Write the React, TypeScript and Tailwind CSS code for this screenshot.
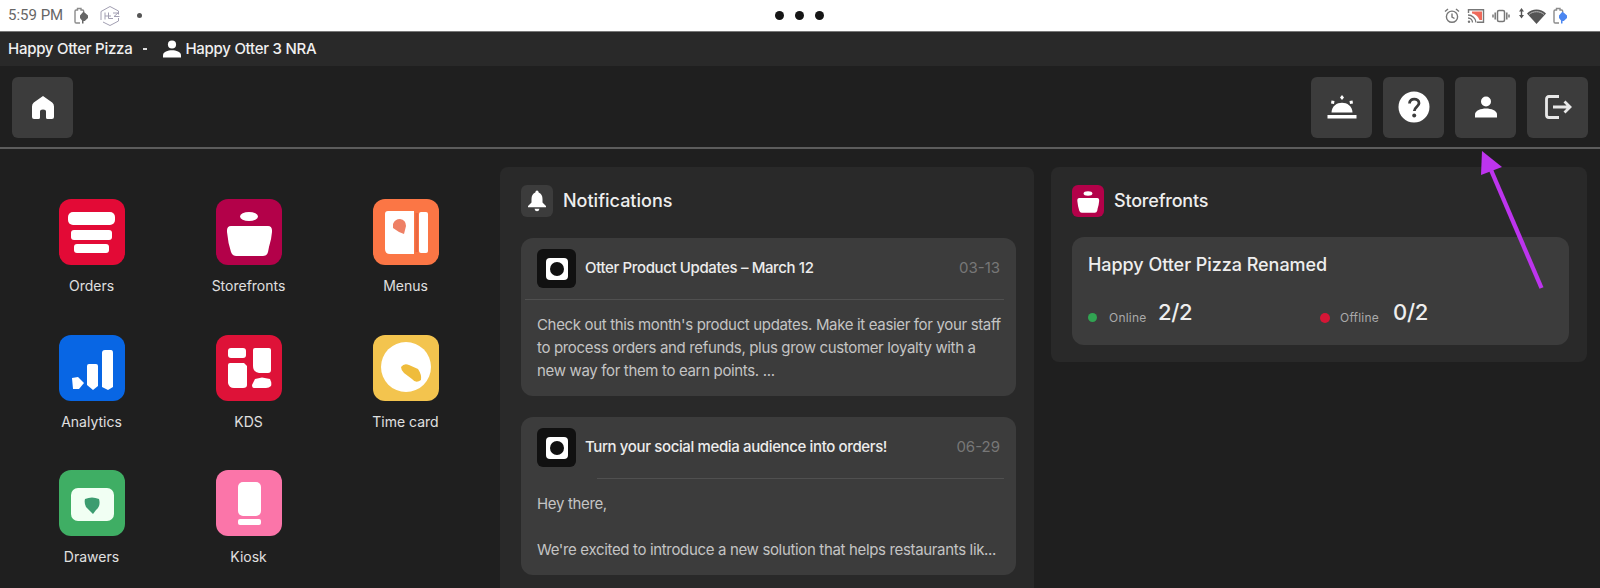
import type { ReactNode } from "react";

// Status bar icons
const BatteryIcon = ({ accent }: { accent: string }) => (
  <svg viewBox="0 0 16 18" className="h-[18px] w-4" fill="none">
    <path d="M7 16H3.2A1.2 1.2 0 0 1 2 14.800V4.200A1.200 1.200 0 0 1 3.200 3H4.500V1.500H8V3H9.500A1.200 1.200 0 0 1 10.700 4.200V5" stroke="#8b8b8b" strokeWidth="1.400" />
    <path d="M10.500 4.500L15 8.500V11L11.800 14H10.500V16.500H9V13.500L7 11V8.500Z" fill={accent} />
  </svg>
);

const HexIcon = () => (
  <svg viewBox="0 0 22 22" className="h-[22px] w-[22px]" fill="none" stroke="#a29fb2" strokeWidth="1">
    <path d="M11 1.500L19.500 6V9.500M11 1.500L2 6.500V15M4 17L11 20.500L19.500 16V13" />
    <path d="M6 7.500V14.500M9.500 7.500V13.500H14M6 11H12M14 8H19L15 11.500H20.500" />
  </svg>
);

const AlarmIcon = () => (
  <svg viewBox="0 0 16 16" className="h-4 w-4" fill="none" stroke="#777" strokeWidth="1.400">
    <circle cx="8" cy="8.700" r="5.600" />
    <path d="M8 5.500V9L10.500 10.500M1 3.500L4 1M15 3.500L12 1" />
  </svg>
);

const CastIcon = () => (
  <svg viewBox="0 0 18 16" className="h-4 w-[18px]" fill="none">
    <path d="M1.500 5V1.800H16.500V14.200H10" stroke="#777" strokeWidth="1.400" />
    <path d="M5 3.500H15V12H12.500C11.500 9 8.500 6 5 5.500Z" fill="#ee6a5b" />
    <path d="M1 7C5 7 9 10.500 9 14.500M1 10C3.500 10 5.500 12 5.500 14.500" stroke="#777" strokeWidth="1.300" />
    <circle cx="2" cy="13.700" r="1.200" fill="#777" />
  </svg>
);

const VibrateIcon = () => (
  <svg viewBox="0 0 18 16" className="h-4 w-[18px]" fill="none" stroke="#777" strokeWidth="1.500">
    <rect x="5.500" y="2.500" width="7" height="11" rx="1.500" />
    <path d="M3.200 4.500V11.500M14.800 4.500V11.500M1 6.500V9.500M17 6.500V9.500" />
  </svg>
);

const WifiIcon = () => (
  <svg viewBox="0 0 28 18" className="h-[18px] w-7" fill="#555">
    <path d="M3.500 1L6 4.500H1ZM3.500 11.500L1 8H6ZM2.800 4H4.200V9H2.800Z" />
    <path d="M18.500 17L9 6.500C14 1 23 1 28 6.500Z" />
    <path d="M11 7.500C15 3.800 22 3.800 26 7.500" fill="none" stroke="#bbb" strokeWidth="1" />
  </svg>
);

// Header icons
const PersonIcon = ({ className }: { className: string }) => (
  <svg viewBox="0 0 22 22" className={className} fill="#fff">
    <circle cx="11" cy="5.500" r="5" />
    <path d="M0 21.500V18.500C0 14.500 6 12.500 11 12.500S22 14.500 22 18.500V21.500Z" />
  </svg>
);

const HomeIcon = () => (
  <svg viewBox="0 0 24 24" className="h-6 w-6" fill="#fff">
    <path d="M12 1L2.800 7.500Q1 9 1 11.500V22Q1 24 3 24H7.500Q9 24 9 22.500V16.500Q9 14.500 12 14.500T15 16.500V22.500Q15 24 16.500 24H21Q23 24 23 22V11.500Q23 9 21.200 7.500Z" />
  </svg>
);

const ServiceIcon = () => (
  <svg viewBox="0 0 30 24" className="h-6 w-[30px]" fill="#fff">
    <path d="M4.500 17.500C5 4.500 25 4.500 25.500 17.500Z" />
    <rect x="0.500" y="20" width="29" height="3.500" />
    <path d="M15 0L17 2.500L15 5L13 2.500ZM4.500 5.500L7.500 6L7 9L4 8.500ZM25.500 5.500L22.500 6L23 9L26 8.500Z" />
  </svg>
);

const HelpIcon = () => (
  <svg viewBox="0 0 32 32" className="h-8 w-8" fill="none">
    <circle cx="16" cy="16" r="15.500" fill="#fff" />
    <path d="M11.500 12.500C11.500 6.500 21 7 21 12.200C21 15.500 16.300 16 16.300 20" stroke="#3c3c3c" strokeWidth="2.800" />
    <circle cx="16.200" cy="24.500" r="2" fill="#3c3c3c" />
  </svg>
);

const LogoutIcon = () => (
  <svg viewBox="0 0 28 26" className="h-[26px] w-7" fill="none" stroke="#e8e8e8" strokeWidth="2.800">
    <path d="M15 2.500H5Q2.500 2.500 2.500 5V21Q2.500 23.500 5 23.500H15" />
    <path d="M9 13H26M20.500 7.500L26 13L20.500 18.500" />
  </svg>
);

const BellIcon = () => (
  <svg viewBox="0 0 20 22" className="h-[22px] w-5" fill="#fff">
    <path d="M10 0.500Q11.500 0.500 11.700 2.500Q15.500 4 15.500 9V12.500L19 16V17.200H1V16L4.500 12.500V9Q4.500 4 8.300 2.500Q8.500 0.500 10 0.500Z" />
    <path d="M7.500 18.700H12.500Q12 21.300 10 21.300T7.500 18.700Z" />
  </svg>
);

const BasketShape = () => (
  <>
    <ellipse cx="33" cy="17.500" rx="9" ry="4.500" />
    <path d="M15 27H52Q56.500 27 56 33Q55.500 40 53 48L52 53Q51 57 47 57H20Q16.500 57 15 53Q12 44 11 33Q10.500 27 15 27Z" />
  </>
);

type AppTile = { name: string; color: string; art: ReactNode };

const apps: AppTile[] = [
  {
    name: "Orders",
    color: "bg-[#e30a36]",
    art: (
      <>
        <rect x="9" y="13" width="47" height="13" rx="5" />
        <rect x="12" y="31" width="41" height="10" rx="3" />
        <rect x="15" y="45" width="35" height="9" rx="3" />
      </>
    ),
  },
  { name: "Storefronts", color: "bg-[#b30149]", art: <BasketShape /> },
  {
    name: "Menus",
    color: "bg-[#fb7645]",
    art: (
      <>
        <path d="M15 12H41V55H17Q12 55 12 50V15Q12 12 15 12Z" />
        <rect x="46" y="13" width="9" height="41" rx="2" />
        <path d="M20 25Q22 20 27 20Q33 21 33 27L31 35Q25 33 20 29Z" fill="#ee8065" />
        <path d="M42.500 14H45V53H42.500Z" fill="#e96742" />
      </>
    ),
  },
  {
    name: "Analytics",
    color: "bg-[#0866e4]",
    art: (
      <>
        <path d="M13 43L19 42L25 48L20 54H14Z" />
        <path d="M28 31Q28 29 30 29H37Q39 29 39 31V51L34 55L28 50Z" />
        <path d="M43 18Q43 15 46 15H52Q54 15 54 18V52L49 55L43 52Z" />
      </>
    ),
  },
  {
    name: "KDS",
    color: "bg-[#de1238]",
    art: (
      <>
        <rect x="12" y="13" width="18" height="10" rx="3" />
        <path d="M12 30Q12 28 14 28H28L31 31V50Q31 53 27 53H18Q13 53 12 48Z" />
        <path d="M37 15Q37 13 39 13H53Q55 13 55 15V35Q55 38 52 38H43Q37 37 37 31Z" />
        <path d="M39 44L46 42.500L54 44Q56 48 55 51Q53 53 50 53H38Q36 53 36 50Z" />
      </>
    ),
  },
  {
    name: "Time card",
    color: "bg-[#f3c44e]",
    art: (
      <>
        <circle cx="33" cy="32" r="25" />
        <path d="M28 32Q31 28 36 30L45 34Q49 40 48 45Q43 49 39 44L31 38Q28 35 28 32Z" fill="#efbc3c" />
      </>
    ),
  },
  {
    name: "Drawers",
    color: "bg-[#3fae64]",
    art: (
      <>
        <rect x="12" y="18" width="43" height="33" rx="7" fill="#f1fff3" />
        <path d="M26 29Q33 26 40 29Q42 36 37 40L34 44L27 37Q25 33 26 29Z" fill="#3c9c70" />
      </>
    ),
  },
  {
    name: "Kiosk",
    color: "bg-[#fb75a9]",
    art: (
      <>
        <rect x="22" y="12" width="23" height="34" rx="5" />
        <rect x="22" y="49" width="23" height="6" rx="2" />
      </>
    ),
  },
];

const NavButton = ({ children }: { children: ReactNode }) => (
  <button className="flex h-[61px] w-[61px] items-center justify-center rounded-md bg-[#3c3c3c]">
    {children}
  </button>
);

type NotificationProps = {
  title: ReactNode;
  date: string;
  divider: string;
  children: ReactNode;
};

const NotificationCard = ({ title, date, divider, children }: NotificationProps) => (
  <article className="h-[158px] rounded-xl bg-[#3c3c3c]">
    <div className="flex h-[61px] items-center pr-4 pl-4">
      <div className="flex h-[39px] w-[39px] items-center justify-center rounded-md bg-[#111]">
        <div className="flex h-[22px] w-[22px] items-center justify-center rounded-[4px] bg-white">
          <div className="h-[14px] w-[14px] rounded-full bg-[#111]" />
        </div>
      </div>
      <h3 className="ml-[9px] flex-1 whitespace-nowrap text-[15px] font-medium tracking-[-0.37px] text-[#ececec]">
        {title}
      </h3>
      <span className="text-[15px] text-[#777]">{date}</span>
    </div>
    <div className={`mr-3 h-px bg-[#505050] ${divider}`} />
    <p className="whitespace-nowrap pt-[13px] pl-4 text-[15px] leading-[23px] tracking-[-0.34px] text-[#c4c4c4]">
      {children}
    </p>
  </article>
);

export default function App() {
  return (
    <div className="relative flex h-[588px] w-[1600px] flex-col overflow-hidden bg-[#1f1f1f] font-['Inter',sans-serif] text-white">
      {/* Status bar */}
      <div className="grid h-[31px] shrink-0 grid-cols-3 items-center bg-white">
        <div className="flex items-center pl-2 text-[#666]">
          <span className="font-['Roboto',sans-serif] text-[15px]">5:59 PM</span>
          <span className="ml-2.5"><BatteryIcon accent="#666" /></span>
          <span className="ml-2.5"><HexIcon /></span>
          <span className="ml-4 h-[5px] w-[5px] rounded-full bg-[#555]" />
        </div>
        <div className="flex justify-center gap-[11px]">
          <span className="h-[9px] w-[9px] rounded-full bg-[#151515]" />
          <span className="h-[9px] w-[9px] rounded-full bg-[#151515]" />
          <span className="h-[9px] w-[9px] rounded-full bg-[#151515]" />
        </div>
        <div className="flex items-center justify-end pr-8">
          <AlarmIcon />
          <span className="ml-[7px]"><CastIcon /></span>
          <span className="ml-[7px]"><VibrateIcon /></span>
          <span className="ml-2"><WifiIcon /></span>
          <span className="ml-1.5"><BatteryIcon accent="#4b86f0" /></span>
        </div>
      </div>

      {/* Account strip */}
      <div className="flex h-[35px] shrink-0 items-center border-t border-[#777] bg-[#292929] pl-2 text-[15px] font-medium tracking-[-0.27px] text-[#f0f0f0]">
        <span>Happy Otter Pizza</span>
        <span className="ml-[11px] h-[2px] w-1 bg-[#ddd]" />
        <PersonIcon className="ml-4 h-[18px] w-[18px]" />
        <span className="ml-1">Happy Otter 3 NRA</span>
      </div>

      {/* Navigation */}
      <header className="flex h-[83px] shrink-0 items-center justify-between border-b-2 border-[#5c5c5c] pt-px pr-3 pl-3">
        <NavButton><HomeIcon /></NavButton>
        <div className="flex gap-[11px]">
          <NavButton><ServiceIcon /></NavButton>
          <NavButton><HelpIcon /></NavButton>
          <NavButton><PersonIcon className="h-[22px] w-[22px]" /></NavButton>
          <NavButton><LogoutIcon /></NavButton>
        </div>
      </header>

      <main className="flex min-h-0 flex-1 items-start pt-[18px]">
        <nav className="grid w-[500px] shrink-0 grid-cols-[repeat(3,157px)] auto-rows-[135.500px] pt-8 pl-[13px]">
          {apps.map((app) => (
            <div key={app.name} className="flex flex-col items-center">
              <div className={`h-[66px] w-[66px] rounded-xl ${app.color}`}>
                <svg viewBox="0 0 66 66" className="h-full w-full" fill="#fff">{app.art}</svg>
              </div>
              <span className="mt-[11px] text-sm leading-5 text-[#e0e0e0]">{app.name}</span>
            </div>
          ))}
        </nav>

        <section className="h-[440px] w-[534px] shrink-0 rounded-lg bg-[#292929] pt-[18px] pr-[18px] pl-[21px]">
          <div className="flex h-8 items-center">
            <div className="flex h-8 w-8 items-center justify-center rounded-md bg-[#3c3c3c]">
              <BellIcon />
            </div>
            <h2 className="ml-[10px] text-lg font-medium text-[#eee]">Notifications</h2>
          </div>
          <div className="mt-[21px] flex flex-col gap-[21px]">
            <NotificationCard title="Otter Product Updates – March 12" date="03-13" divider="ml-1">
              Check out this month's product updates. Make it easier for your staff
              <br />
              to process orders and refunds, plus grow customer loyalty with a
              <br />
              new way for them to earn points. ...
            </NotificationCard>
            <NotificationCard title="Turn your social media audience into orders!" date="06-29" divider="ml-[76px]">
              Hey there,
              <br />
              <br />
              We're excited to introduce a new solution that helps restaurants lik...
            </NotificationCard>
          </div>
        </section>

        <section className="ml-[17px] h-[195px] w-[536px] shrink-0 rounded-lg bg-[#292929] pt-[18px] pr-[18px] pl-[21px]">
          <div className="flex h-8 items-center">
            <div className="h-8 w-8 rounded-md bg-[#b30149]">
              <svg viewBox="0 0 66 66" className="h-full w-full" fill="#fff"><BasketShape /></svg>
            </div>
            <h2 className="ml-[10px] text-lg font-medium tracking-[-0.2px] text-[#eee]">Storefronts</h2>
          </div>
          <div className="mt-5 h-[108px] rounded-xl bg-[#3c3c3c] pt-4 pl-4">
            <h3 className="text-lg leading-6 font-medium tracking-[-0.05px] text-[#eee]">Happy Otter Pizza Renamed</h3>
            <div className="mt-[21px] grid grid-cols-[232px_1fr] leading-7">
              <div className="flex items-center">
                <span className="mt-[11px] h-[9px] w-[9px] rounded-full bg-[#31a452]" />
                <span className="mt-3 ml-3 w-[49px] text-xs tracking-[0.2px] text-[#aaa]">Online</span>
                <span className="text-[22px] font-medium tracking-[-0.3px] text-[#eee]">2/2</span>
              </div>
              <div className="flex items-center">
                <span className="mt-[11px] h-[10px] w-[10px] rounded-full bg-[#d51636]" />
                <span className="mt-3 ml-2.5 w-[53px] text-xs tracking-[0.2px] text-[#aaa]">Offline</span>
                <span className="text-[22px] font-medium tracking-[-0.3px] text-[#eee]">0/2</span>
              </div>
            </div>
          </div>
        </section>
      </main>

      {/* Pointer to the profile button */}
      <svg viewBox="0 0 64 140" className="absolute top-[150px] left-[1480px] h-[140px] w-16" fill="#bd34ee">
        <path d="M2 1L22 17L1 25Z" />
        <path d="M11 20L61.500 138" stroke="#bd34ee" strokeWidth="4.300" />
      </svg>
    </div>
  );
}
